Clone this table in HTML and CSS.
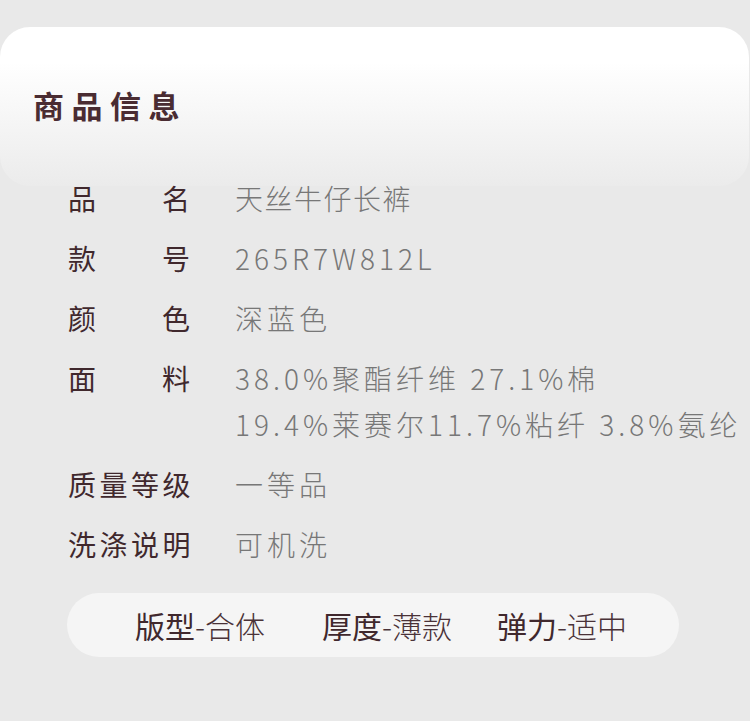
FILE: index.html
```html
<!DOCTYPE html>
<html lang="zh-CN">
<head>
    <meta charset="UTF-8">
    <meta name="viewport" content="width=device-width, initial-scale=1.0">
    <title>商品信息</title>
    <link rel="stylesheet" href="styles.css">
</head>
<body>

<div class="product-info">
    <!-- 标题 -->
    <div class="info-header">
        <h2>商品信息</h2>
    </div>

    <!-- 参数列表 -->
    <div class="info-list">
        <div class="info-row">
            <span class="info-label"><i>品</i><i>名</i></span>
            <span class="info-value narrow">天丝牛仔长裤</span>
        </div>
        <div class="info-row">
            <span class="info-label"><i>款</i><i>号</i></span>
            <span class="info-value">265R7W812L</span>
        </div>
        <div class="info-row">
            <span class="info-label"><i>颜</i><i>色</i></span>
            <span class="info-value">深蓝色</span>
        </div>
        <div class="info-row">
            <span class="info-label"><i>面</i><i>料</i></span>
            <span class="info-value">38.0%聚酯纤维 27.1%棉<br>19.4%莱赛尔11.7%粘纤 3.8%氨纶</span>
        </div>
        <div class="info-row">
            <span class="info-label">质量等级</span>
            <span class="info-value">一等品</span>
        </div>
        <div class="info-row">
            <span class="info-label">洗涤说明</span>
            <span class="info-value">可机洗</span>
        </div>
    </div>

    <!-- 版型 / 厚度 / 弹力 -->
    <div class="tag-bar">
        <div class="tag tag-fit"><b>版型</b>-合体</div>
        <div class="tag tag-thick"><b>厚度</b>-薄款</div>
        <div class="tag tag-stretch"><b>弹力</b>-适中</div>
    </div>
</div>

</body>
</html>
```

FILE: styles.css
```css
body {
    margin: 0;
    padding: 0;
    background-color: #e9e9e9;
    font-family: "Noto Sans CJK SC", "Noto Sans", sans-serif;
}
.product-info {
    padding-top: 27px;
}
.info-header {
    height: 159px;
    width: 749px;
    border-radius: 30px;
    background: linear-gradient(#ffffff 22%, #ebebeb);
    display: flex;
    align-items: center;
}
.info-header h2 {
    margin: 0 0 4px 33px;
    font-size: 31px;
    line-height: 1;
    font-weight: 700;
    letter-spacing: 7.5px;
    color: #4a2c32;
}
.info-list {
    margin-top: -11px;
    padding-left: 68px;
    display: flex;
    flex-direction: column;
    gap: 14px;
}
.info-row {
    display: flex;
    font-size: 28px;
    line-height: 46px;
}
.info-label {
    width: 122px;
    flex-shrink: 0;
    display: flex;
    justify-content: space-between;
    color: #40282d;
    letter-spacing: 3.5px;
    white-space: nowrap;
}
.info-label i {
    font-style: normal;
    letter-spacing: 0;
}
.info-value {
    margin-left: 45px;
    color: #777777;
    font-weight: 300;
    letter-spacing: 4px;
    white-space: nowrap;
}
.info-value.narrow {
    letter-spacing: 1.5px;
}
.tag-bar {
    margin: 26px 0 0 67px;
    width: 612px;
    height: 64px;
    box-sizing: border-box;
    padding-left: 68px;
    border-radius: 32px;
    background-color: #f5f5f5;
    display: flex;
    align-items: center;
}
.tag {
    font-size: 30px;
    font-weight: 300;
    color: #4a3238;
    white-space: nowrap;
}
.tag b {
    font-weight: 400;
    color: #40282d;
}
.tag-thick {
    margin-left: 57px;
}
.tag-stretch {
    margin-left: 45px;
}
```
